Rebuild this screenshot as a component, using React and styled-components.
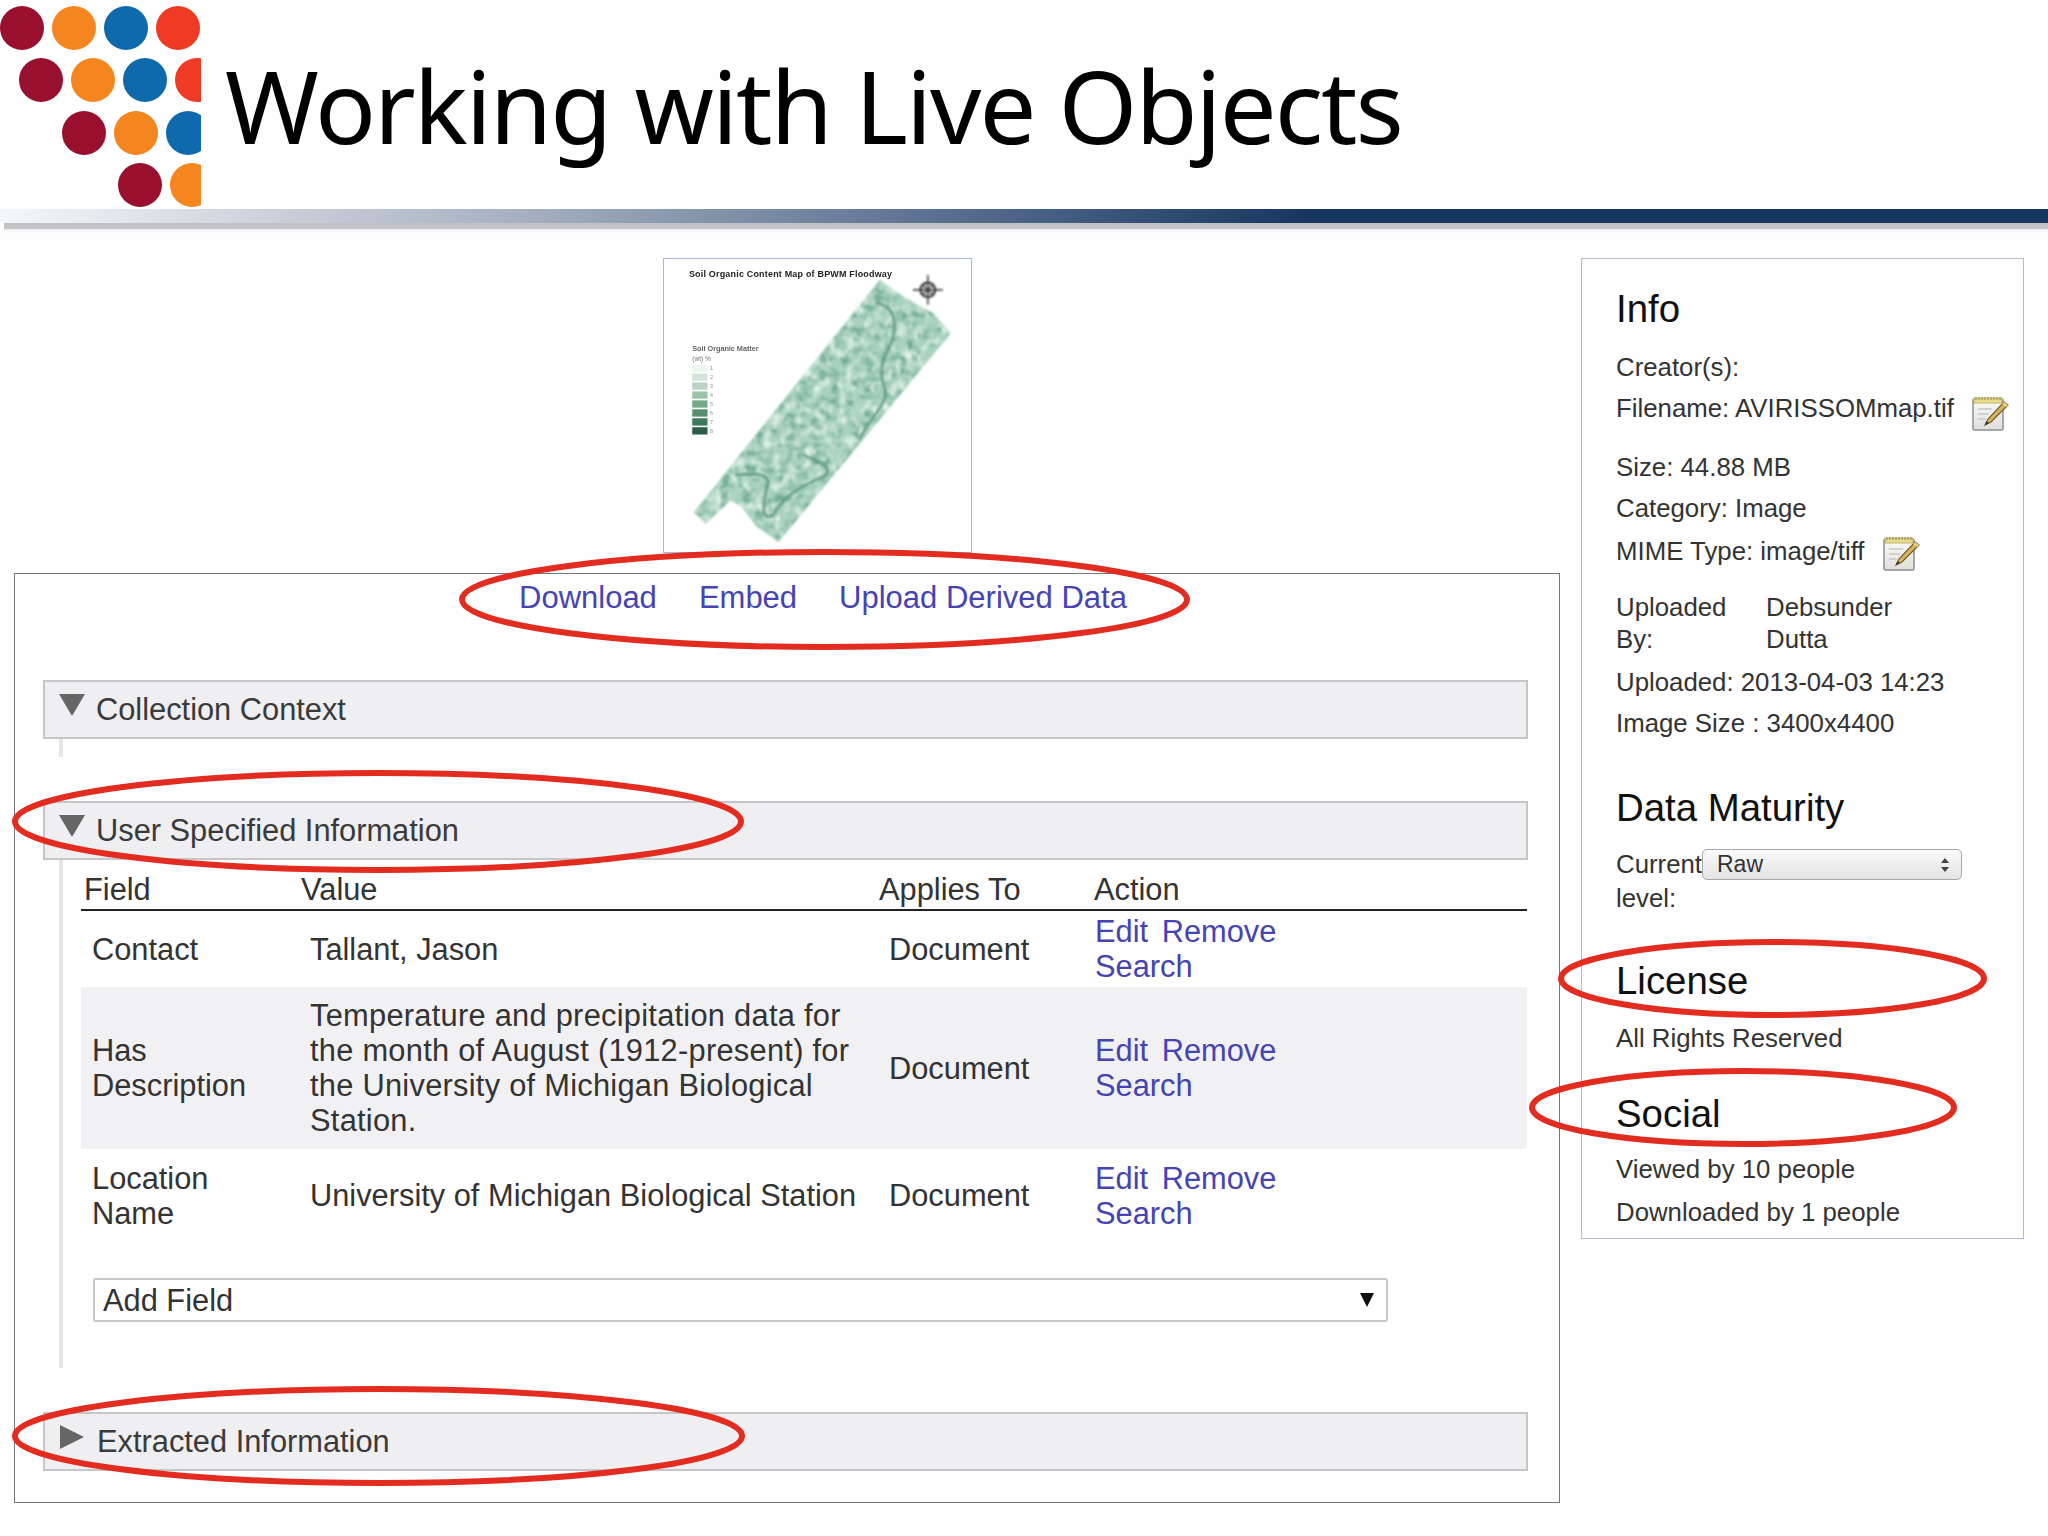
import React from 'react'
import styled, { createGlobalStyle } from 'styled-components'

const GlobalStyle = createGlobalStyle`
  html, body { margin: 0; padding: 0; background: #fefefe; }
  body { font-family: "Liberation Sans", Arial, sans-serif; color: #333; }
`

const Page = styled.div`
  position: relative;
  width: 2048px;
  height: 1536px;
  overflow: hidden;
  background: #fefefe;
`

const Header = styled.header`
  display: flex;
  height: 209px;
`

const Title = styled.h1`
  margin: 0 0 0 24px;
  font-family: "Noto Sans", sans-serif;
  font-weight: 400;
  font-size: 101px;
  letter-spacing: -2px;
  line-height: 211px;
  color: #000;
  white-space: nowrap;
`

const Bar = styled.div`
  height: 14px;
  background: linear-gradient(90deg, #f5f6f8 0%, #a7b1c1 25%, #52698a 48%, #17365f 64%, #17365f 100%);
`

const BarShadow = styled.div`
  height: 11px;
  margin-left: 4px;
  background: linear-gradient(180deg, #c2c2c4 0%, #c6c6c8 55%, #f6f6f8 60%, #fefefe 100%);
`

const Content = styled.main`
  display: grid;
  grid-template-columns: 1546px 443px;
  column-gap: 21px;
  align-items: start;
  padding: 24px 0 0 14px;
`

const Thumb = styled.div`
  width: 307px;
  height: 293px;
  margin-left: 649px;
  border: 1px solid #a9b8d2;
  background: #fff;
  overflow: hidden;
  svg { display: block; width: 100%; height: 100%; }
  text { font-family: "Liberation Sans", sans-serif; }
`

const MainPanel = styled.section`
  margin-top: 20px;
  padding: 6px 31px 31px 28px;
  border: 1px solid #777;
  box-sizing: border-box;
  font-size: 30.8px;
  line-height: 35px;
`

const LinkRow = styled.div`
  display: flex;
  gap: 42px;
  margin: 0 0 65px 476px;
  font-size: 31px;
`

const TextLink = styled.a`
  color: #4643b4;
  text-decoration: none;
  cursor: pointer;
`

const SectionBar = styled.div`
  display: flex;
  align-items: center;
  box-sizing: border-box;
  height: 59px;
  padding: 0 0 0 14px;
  background: #efeef1;
  border: 2px solid #c6c6c8;
  color: #3a3a3a;
`

const Triangle = styled.span`
  flex: none;
  width: 0;
  height: 0;
  margin: -10px 11px 0 0;
  ${p => p.$open
    ? 'border-left: 13px solid transparent; border-right: 13px solid transparent; border-top: 22px solid #666;'
    : 'border-top: 12px solid transparent; border-bottom: 12px solid transparent; border-left: 24px solid #666; margin-right: 13px; margin-left: 1px;'}
`

const SectionBody = styled.div`
  margin: 0 0 ${p => p.$after}px 16px;
  padding: 0 1px 46px 18px;
  border-left: 4px solid #e6e6e7;
  ${p => p.$empty && 'height: 18px; padding: 0; box-sizing: border-box;'}
`

const Grid = styled.div`
  display: grid;
  grid-template-columns: 217px 578px 215px 1fr;
  align-items: center;
`

const HeadRow = styled(Grid)`
  height: 49px;
  padding-top: 9px;
  box-sizing: border-box;
  span { padding-left: 3px; color: #333; }
`

const HeadLine = styled.div`
  height: 2px;
  background: #222;
`

const DataRow = styled(Grid)`
  height: ${p => p.$h}px;
  background: ${p => (p.$shaded ? '#f1f1f3' : 'transparent')};
  border-radius: 0 0 4px 0;
`

const Cell = styled.div`
  padding-left: ${p => p.$pad}px;
`

const LongText = styled(Cell)`
  letter-spacing: 0.27px;
`

const ActionCell = styled.div`
  width: 240px;
  padding-left: 4px;
  ${TextLink} { margin-right: 5px; }
`

const FakeSelect = styled.div`
  display: flex;
  align-items: center;
  justify-content: space-between;
  box-sizing: border-box;
  width: 1295px;
  height: 44px;
  margin: 36px 0 0 12px;
  padding: 0 12px 0 8px;
  background: #fff;
  border: 2px solid #c8c8ca;
  border-radius: 3px;
`

const SelectArrow = styled.span`
  width: 0;
  height: 0;
  border-left: 7px solid transparent;
  border-right: 7px solid transparent;
  border-top: 14px solid #111;
`

const InfoPanel = styled.aside`
  box-sizing: border-box;
  height: 981px;
  padding: 25px 0 0 34px;
  border: 1px solid #b4bbd0;
  font-size: 25.8px;
  color: #333;
`

const Heading = styled.h3`
  margin: ${p => p.$top || 0}px 0 ${p => p.$bottom || 0}px;
  font-weight: 400;
  font-size: 38.4px;
  line-height: 50px;
  color: #111;
`

const InfoRow = styled.div`
  display: flex;
  height: 41px;
  line-height: 41px;
  margin: ${p => p.$top || 0}px 0 ${p => p.$bottom || 0}px;
  white-space: nowrap;
`

const EditIcon = styled.svg`
  flex: none;
  width: 38px;
  height: 38px;
  margin: ${p => p.$offset}px 0 0 ${p => p.$left}px;
`

const TwoCol = styled.div`
  display: grid;
  grid-template-columns: ${p => p.$label}px auto;
  justify-content: start;
  line-height: ${p => p.$line}px;
  margin-top: ${p => p.$top}px;
`

const MaturitySelect = styled.div`
  display: flex;
  align-items: center;
  justify-content: space-between;
  box-sizing: border-box;
  width: 260px;
  height: 31px;
  margin-top: 2px;
  padding: 0 11px 0 14px;
  font-size: 23px;
  line-height: 27px;
  border: 1px solid #a8a8ac;
  border-radius: 5px;
  background: linear-gradient(180deg, #fbfbfb 0%, #ededed 55%, #e4e4e4 100%);
`

const UpDown = styled.svg`
  width: 10px;
  height: 16px;
`

const Annotation = styled.svg`
  position: absolute;
  left: ${p => p.$x}px;
  top: ${p => p.$y}px;
  width: ${p => p.$w}px;
  height: ${p => p.$h}px;
  overflow: visible;
  pointer-events: none;
`

function Logo() {
  const colors = ['#98102e', '#f5851f', '#0f6aad', '#ef3a24']
  const rows = [
    { y: 28, dots: [[22, 0], [74, 1], [126, 2], [178, 3]] },
    { y: 80, dots: [[41, 0], [93, 1], [145, 2], [197, 3]] },
    { y: 133, dots: [[84, 0], [136, 1], [188, 2]] },
    { y: 185, dots: [[140, 0], [192, 1]] },
  ]
  return (
    <svg width="201" height="209" viewBox="0 0 201 209" style={{ flex: 'none' }}>
      {rows.map(r => r.dots.map(([x, c]) => (
        <circle key={`${x}-${r.y}`} cx={x} cy={r.y} r="22" fill={colors[c]} />
      )))}
    </svg>
  )
}

function NotepadIcon(props) {
  return (
    <EditIcon viewBox="0 0 38 38" {...props}>
      <defs>
        <linearGradient id="padFill" x1="0" y1="0" x2="0" y2="1">
          <stop offset="0" stopColor="#fbfbf6" />
          <stop offset="1" stopColor="#dfe0dc" />
        </linearGradient>
      </defs>
      <rect x="1" y="5" width="30" height="31" rx="1.5" fill="url(#padFill)" stroke="#8b8f90" strokeWidth="1.5" />
      <rect x="2" y="4" width="28" height="5" fill="#e9dc8f" stroke="#b7a950" strokeWidth=".8" />
      <path d="M4 3v3M7 3v3M10 3v3M13 3v3M16 3v3M19 3v3M22 3v3M25 3v3M28 3v3" stroke="#8c8452" strokeWidth="1" />
      <path d="M6 15h14M6 20h11M6 25h8" stroke="#c5c8cc" strokeWidth="1.4" />
      <path d="M32 8l4 3-17 17-6 3 3-6z" fill="#d8b35f" stroke="#6d5a2c" strokeWidth="1.1" />
      <path d="M13 31l1.5-4 2.5 2z" fill="#333" />
      <path d="M32 8l4 3-2 2-4-3z" fill="#e8d27a" />
    </EditIcon>
  )
}

function ThumbMap() {
  const legend = ['#eef6f0', '#d4e4da', '#bcd3c4', '#9cc2aa', '#74aa88', '#558f6e', '#3a7a58', '#2c5f46']
  return (
    <svg viewBox="0 0 925 883">
      <defs>
        <filter id="mapTexture" x="0" y="0" width="100%" height="100%" colorInterpolationFilters="sRGB">
          <feTurbulence type="fractalNoise" baseFrequency="0.03 0.045" numOctaves="4" seed="3" result="darkNoise" />
          <feColorMatrix in="darkNoise" values="0 0 0 0 0.40  0 0 0 0 0.65  0 0 0 0 0.54  2.6 0 0 0 -1.1" result="darkTone" />
          <feComposite in="darkTone" in2="SourceGraphic" operator="in" result="darkCut" />
          <feTurbulence type="fractalNoise" baseFrequency="0.04 0.03" numOctaves="4" seed="12" result="lightNoise" />
          <feColorMatrix in="lightNoise" values="0 0 0 0 0.90  0 0 0 0 0.96  0 0 0 0 0.93  2.4 0 0 0 -1.05" result="lightTone" />
          <feComposite in="lightTone" in2="SourceGraphic" operator="in" result="lightCut" />
          <feMerge>
            <feMergeNode in="SourceGraphic" />
            <feMergeNode in="darkCut" />
            <feMergeNode in="lightCut" />
          </feMerge>
        </filter>
        <filter id="soft"><feGaussianBlur stdDeviation="3" /></filter>
        <filter id="softer"><feGaussianBlur stdDeviation="1.8" /></filter>
      </defs>
      <text x="75" y="54" fontSize="27" fontWeight="700" fill="#222" filter="url(#softer)" textLength="612">Soil Organic Content Map of BPWM Floodway</text>
      <g filter="url(#soft)">
        <polygon
          points="650,63 730,118 810,163 865,223 345,853 275,803 235,748 200,728 125,798 90,763"
          fill="#a9d2bd"
          filter="url(#mapTexture)"
        />
        <path
          d="M640 130 C700 150 700 190 690 240 C670 290 640 320 665 390 C680 430 620 480 590 540 M420 590 C480 620 500 620 490 650 C430 680 370 700 330 770 C300 790 290 760 315 670 C300 640 260 650 215 650"
          fill="none"
          stroke="#5f9d82"
          strokeOpacity=".9"
          strokeWidth="9"
        />
        <circle cx="795" cy="93" r="22" fill="none" stroke="#333" strokeWidth="7" />
        <path d="M795 48v90M750 93h90M778 76l34 34M812 76l-34 34" stroke="#444" strokeWidth="5" />
      </g>
      <g filter="url(#softer)">
        <text x="85" y="278" fontSize="22" fontWeight="700" fill="#666" textLength="200">Soil Organic Matter</text>
        <text x="85" y="306" fontSize="20" fill="#777">(wt) %</text>
        {legend.map((c, i) => (
          <g key={c}>
            <rect x="85" y={318 + i * 27} width="46" height="22" fill={c} />
            <text x="138" y={336 + i * 27} fontSize="18" fill="#999">{i + 1}</text>
          </g>
        ))}
      </g>
    </svg>
  )
}

function Actions() {
  return (
    <ActionCell>
      <TextLink>Edit</TextLink> <TextLink>Remove</TextLink> <TextLink>Search</TextLink>
    </ActionCell>
  )
}

function Ring({ x, y, w, h, width = 6 }) {
  return (
    <Annotation $x={x} $y={y} $w={w} $h={h} viewBox={`0 0 ${w} ${h}`}>
      <ellipse cx={w / 2} cy={h / 2} rx={w / 2 - width / 2} ry={h / 2 - width / 2} fill="none" stroke="#e22c20" strokeWidth={width} />
    </Annotation>
  )
}

export default function App() {
  return (
    <Page>
      <GlobalStyle />
      <Header>
        <Logo />
        <Title>Working with Live Objects</Title>
      </Header>
      <Bar />
      <BarShadow />
      <Content>
        <div>
          <Thumb><ThumbMap /></Thumb>
          <MainPanel>
            <LinkRow>
              <TextLink>Download</TextLink>
              <TextLink>Embed</TextLink>
              <TextLink>Upload Derived Data</TextLink>
            </LinkRow>

            <SectionBar><Triangle $open />Collection Context</SectionBar>
            <SectionBody $empty $after={44} />

            <SectionBar><Triangle $open />User Specified Information</SectionBar>
            <SectionBody $after={44}>
              <HeadRow>
                <span>Field</span><span>Value</span><span>Applies To</span><span>Action</span>
              </HeadRow>
              <HeadLine />
              <DataRow $h={76}>
                <Cell $pad={11}>Contact</Cell>
                <Cell $pad={12}>Tallant, Jason</Cell>
                <Cell $pad={13}>Document</Cell>
                <Actions />
              </DataRow>
              <DataRow $h={162} $shaded>
                <Cell $pad={11}>Has<br />Description</Cell>
                <LongText $pad={12}>Temperature and precipitation data for the month of August (1912-present) for the University of Michigan Biological Station.</LongText>
                <Cell $pad={13}>Document</Cell>
                <Actions />
              </DataRow>
              <DataRow $h={93}>
                <Cell $pad={11}>Location<br />Name</Cell>
                <Cell $pad={12}>University of Michigan Biological Station</Cell>
                <Cell $pad={13}>Document</Cell>
                <Actions />
              </DataRow>
              <FakeSelect>Add Field<SelectArrow /></FakeSelect>
            </SectionBody>

            <SectionBar><Triangle />Extracted Information</SectionBar>
          </MainPanel>
        </div>

        <InfoPanel>
          <Heading>Info</Heading>
          <InfoRow $top={13}>Creator(s):</InfoRow>
          <InfoRow $bottom={18}>
            Filename: AVIRISSOMmap.tif
            <NotepadIcon $offset={6} $left={18} />
          </InfoRow>
          <InfoRow>Size: 44.88 MB</InfoRow>
          <InfoRow>Category: Image</InfoRow>
          <InfoRow $top={2}>
            MIME Type: image/tiff
            <NotepadIcon $offset={3} $left={18} />
          </InfoRow>
          <TwoCol $label={150} $line={32} $top={19}>
            <div>Uploaded<br />By:</div>
            <div>Debsunder<br />Dutta</div>
          </TwoCol>
          <InfoRow $top={7}>Uploaded: 2013-04-03 14:23</InfoRow>
          <InfoRow>Image Size : 3400x4400</InfoRow>
          <Heading $top={39}>Data Maturity</Heading>
          <TwoCol $label={86} $line={34} $top={14}>
            <div>Current<br />level:</div>
            <MaturitySelect>
              Raw
              <UpDown viewBox="0 0 10 16">
                <path d="M5 1l4 5H1zM5 15l4-5H1z" fill="#444" />
              </UpDown>
            </MaturitySelect>
          </TwoCol>
          <Heading $top={41}>License</Heading>
          <InfoRow $top={12}>All Rights Reserved</InfoRow>
          <Heading $top={30}>Social</Heading>
          <InfoRow $top={10}>Viewed by 10 people</InfoRow>
          <InfoRow $top={2}>Downloaded by 1 people</InfoRow>
        </InfoPanel>
      </Content>

      <Ring x={459} y={549} w={731} h={101} />
      <Ring x={12} y={770} w={732} h={103} />
      <Ring x={12} y={1386} w={733} h={100} />
      <Ring x={1558} y={939} w={429} h={79} />
      <Ring x={1529} y={1068} w={428} h={79} />
    </Page>
  )
}
